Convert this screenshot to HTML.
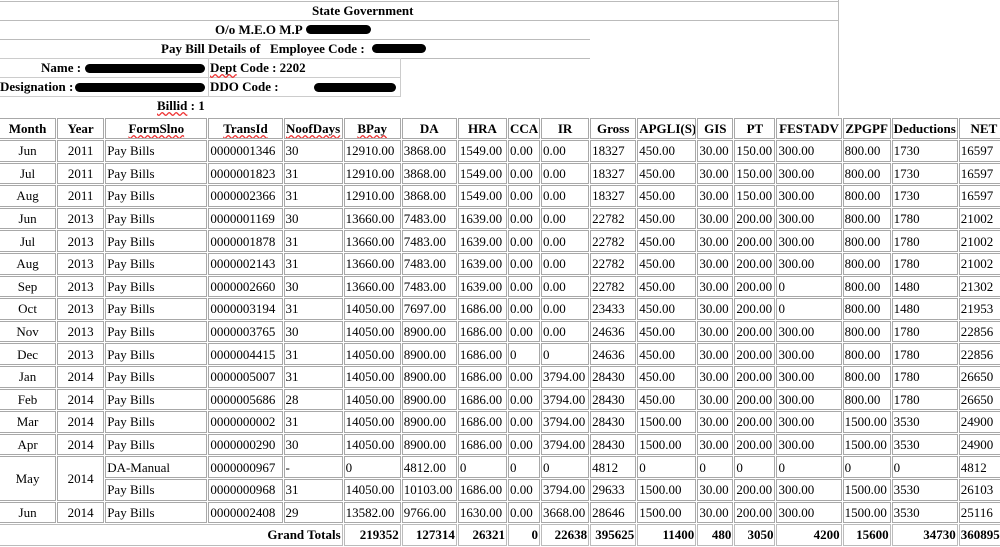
<!DOCTYPE html>
<html><head><meta charset="utf-8"><style>
html,body{margin:0;padding:0;width:1000px;height:547px;overflow:hidden;background:#fff;font-family:"Liberation Serif","Times New Roman",serif;font-size:13px;color:#000}
.a{position:absolute;white-space:nowrap}
.b{font-weight:bold}
.hl{position:absolute;height:0;border-top:1px solid #bbb}
.vl{position:absolute;width:0;border-left:1px solid #bbb}
.box{position:absolute;border:1px solid #ccc;box-sizing:border-box}
.red{position:absolute;background:#000;border-radius:6px;height:9px}
.sq{text-decoration:underline wavy #e33;text-decoration-skip-ink:none}
table{position:absolute;left:-2px;top:117px;border-collapse:separate;border-spacing:1px 1px;table-layout:fixed;width:1012px}
td,th{border:1px solid #a8a8a8;height:19.6px;padding:0 1px;white-space:nowrap;overflow:hidden;text-align:left;font-weight:normal;line-height:19px}
th{font-weight:bold;text-align:center;height:19px}
td.c{text-align:center}
tr.t td{font-weight:bold;text-align:right;border-color:#bbb}
</style></head><body>
<div class="hl" style="left:0;top:1px;width:838px"></div>
<div class="hl" style="left:0;top:20px;width:838px"></div>
<div class="hl" style="left:0;top:39px;width:590px"></div>
<div class="hl" style="left:0;top:58px;width:590px"></div>
<div class="vl" style="left:838px;top:0;height:116px"></div>
<div class="a b" style="left:312px;top:3px">State Government</div>
<div class="a b" style="left:215px;top:22px">O/o M.E.O M.P</div>
<div class="red" style="left:306px;top:25px;width:65px"></div>
<div class="a b" style="left:161px;top:41px">Pay Bill Details of &nbsp;&nbsp;Employee Code :</div>
<div class="red" style="left:372px;top:44px;width:54px"></div>
<div class="box" style="left:-1px;top:58px;width:210px;height:20px"></div>
<div class="box" style="left:208px;top:58px;width:193px;height:20px"></div>
<div class="box" style="left:-1px;top:77px;width:210px;height:20px"></div>
<div class="box" style="left:208px;top:77px;width:193px;height:20px"></div>
<div class="a b" style="left:41px;top:60px">Name :</div>
<div class="red" style="left:85px;top:64px;width:120px"></div>
<div class="a b" style="left:210px;top:60px"><span class="sq">Dept</span> Code : 2202</div>
<div class="a b" style="left:0;top:79px">Designation :</div>
<div class="red" style="left:75px;top:83px;width:130px"></div>
<div class="a b" style="left:210px;top:79px">DDO Code :</div>
<div class="red" style="left:314px;top:83px;width:82px"></div>
<div class="a b" style="left:157px;top:98px"><span class="sq">Billid</span> : 1</div>
<table>
<colgroup><col style="width:57px"><col style="width:47px"><col style="width:102px"><col style="width:74px"><col style="width:59px"><col style="width:57px"><col style="width:55px"><col style="width:49px"><col style="width:32px"><col style="width:48px"><col style="width:46px"><col style="width:59px"><col style="width:36px"><col style="width:41px"><col style="width:65px"><col style="width:48px"><col style="width:66px"><col style="width:50px"></colgroup>
<tr><th>Month</th><th>Year</th><th><span class="sq">FormSlno</span></th><th><span class="sq">TransId</span></th><th><span class="sq">NoofDays</span></th><th><span class="sq">BPay</span></th><th>DA</th><th>HRA</th><th>CCA</th><th>IR</th><th>Gross</th><th>APGLI(S)</th><th>GIS</th><th>PT</th><th>FESTADV</th><th>ZPGPF</th><th>Deductions</th><th>NET</th></tr>
<tr><td class="c">Jun</td><td class="c">2011</td><td>Pay Bills</td><td>0000001346</td><td>30</td><td>12910.00</td><td>3868.00</td><td>1549.00</td><td>0.00</td><td>0.00</td><td>18327</td><td>450.00</td><td>30.00</td><td>150.00</td><td>300.00</td><td>800.00</td><td>1730</td><td>16597</td></tr>
<tr><td class="c">Jul</td><td class="c">2011</td><td>Pay Bills</td><td>0000001823</td><td>31</td><td>12910.00</td><td>3868.00</td><td>1549.00</td><td>0.00</td><td>0.00</td><td>18327</td><td>450.00</td><td>30.00</td><td>150.00</td><td>300.00</td><td>800.00</td><td>1730</td><td>16597</td></tr>
<tr><td class="c">Aug</td><td class="c">2011</td><td>Pay Bills</td><td>0000002366</td><td>31</td><td>12910.00</td><td>3868.00</td><td>1549.00</td><td>0.00</td><td>0.00</td><td>18327</td><td>450.00</td><td>30.00</td><td>150.00</td><td>300.00</td><td>800.00</td><td>1730</td><td>16597</td></tr>
<tr><td class="c">Jun</td><td class="c">2013</td><td>Pay Bills</td><td>0000001169</td><td>30</td><td>13660.00</td><td>7483.00</td><td>1639.00</td><td>0.00</td><td>0.00</td><td>22782</td><td>450.00</td><td>30.00</td><td>200.00</td><td>300.00</td><td>800.00</td><td>1780</td><td>21002</td></tr>
<tr><td class="c">Jul</td><td class="c">2013</td><td>Pay Bills</td><td>0000001878</td><td>31</td><td>13660.00</td><td>7483.00</td><td>1639.00</td><td>0.00</td><td>0.00</td><td>22782</td><td>450.00</td><td>30.00</td><td>200.00</td><td>300.00</td><td>800.00</td><td>1780</td><td>21002</td></tr>
<tr><td class="c">Aug</td><td class="c">2013</td><td>Pay Bills</td><td>0000002143</td><td>31</td><td>13660.00</td><td>7483.00</td><td>1639.00</td><td>0.00</td><td>0.00</td><td>22782</td><td>450.00</td><td>30.00</td><td>200.00</td><td>300.00</td><td>800.00</td><td>1780</td><td>21002</td></tr>
<tr><td class="c">Sep</td><td class="c">2013</td><td>Pay Bills</td><td>0000002660</td><td>30</td><td>13660.00</td><td>7483.00</td><td>1639.00</td><td>0.00</td><td>0.00</td><td>22782</td><td>450.00</td><td>30.00</td><td>200.00</td><td>0</td><td>800.00</td><td>1480</td><td>21302</td></tr>
<tr><td class="c">Oct</td><td class="c">2013</td><td>Pay Bills</td><td>0000003194</td><td>31</td><td>14050.00</td><td>7697.00</td><td>1686.00</td><td>0.00</td><td>0.00</td><td>23433</td><td>450.00</td><td>30.00</td><td>200.00</td><td>0</td><td>800.00</td><td>1480</td><td>21953</td></tr>
<tr><td class="c">Nov</td><td class="c">2013</td><td>Pay Bills</td><td>0000003765</td><td>30</td><td>14050.00</td><td>8900.00</td><td>1686.00</td><td>0.00</td><td>0.00</td><td>24636</td><td>450.00</td><td>30.00</td><td>200.00</td><td>300.00</td><td>800.00</td><td>1780</td><td>22856</td></tr>
<tr><td class="c">Dec</td><td class="c">2013</td><td>Pay Bills</td><td>0000004415</td><td>31</td><td>14050.00</td><td>8900.00</td><td>1686.00</td><td>0</td><td>0</td><td>24636</td><td>450.00</td><td>30.00</td><td>200.00</td><td>300.00</td><td>800.00</td><td>1780</td><td>22856</td></tr>
<tr><td class="c">Jan</td><td class="c">2014</td><td>Pay Bills</td><td>0000005007</td><td>31</td><td>14050.00</td><td>8900.00</td><td>1686.00</td><td>0.00</td><td>3794.00</td><td>28430</td><td>450.00</td><td>30.00</td><td>200.00</td><td>300.00</td><td>800.00</td><td>1780</td><td>26650</td></tr>
<tr><td class="c">Feb</td><td class="c">2014</td><td>Pay Bills</td><td>0000005686</td><td>28</td><td>14050.00</td><td>8900.00</td><td>1686.00</td><td>0.00</td><td>3794.00</td><td>28430</td><td>450.00</td><td>30.00</td><td>200.00</td><td>300.00</td><td>800.00</td><td>1780</td><td>26650</td></tr>
<tr><td class="c">Mar</td><td class="c">2014</td><td>Pay Bills</td><td>0000000002</td><td>31</td><td>14050.00</td><td>8900.00</td><td>1686.00</td><td>0.00</td><td>3794.00</td><td>28430</td><td>1500.00</td><td>30.00</td><td>200.00</td><td>300.00</td><td>1500.00</td><td>3530</td><td>24900</td></tr>
<tr><td class="c">Apr</td><td class="c">2014</td><td>Pay Bills</td><td>0000000290</td><td>30</td><td>14050.00</td><td>8900.00</td><td>1686.00</td><td>0.00</td><td>3794.00</td><td>28430</td><td>1500.00</td><td>30.00</td><td>200.00</td><td>300.00</td><td>1500.00</td><td>3530</td><td>24900</td></tr>
<tr><td class="c" rowspan="2">May</td><td class="c" rowspan="2">2014</td><td>DA-Manual</td><td>0000000967</td><td>-</td><td>0</td><td>4812.00</td><td>0</td><td>0</td><td>0</td><td>4812</td><td>0</td><td>0</td><td>0</td><td>0</td><td>0</td><td>0</td><td>4812</td></tr>
<tr><td>Pay Bills</td><td>0000000968</td><td>31</td><td>14050.00</td><td>10103.00</td><td>1686.00</td><td>0.00</td><td>3794.00</td><td>29633</td><td>1500.00</td><td>30.00</td><td>200.00</td><td>300.00</td><td>1500.00</td><td>3530</td><td>26103</td></tr>
<tr><td class="c">Jun</td><td class="c">2014</td><td>Pay Bills</td><td>0000002408</td><td>29</td><td>13582.00</td><td>9766.00</td><td>1630.00</td><td>0.00</td><td>3668.00</td><td>28646</td><td>1500.00</td><td>30.00</td><td>200.00</td><td>300.00</td><td>1500.00</td><td>3530</td><td>25116</td></tr>
<tr class="t"><td colspan="5">Grand Totals</td><td>219352</td><td>127314</td><td>26321</td><td>0</td><td>22638</td><td>395625</td><td>11400</td><td>480</td><td>3050</td><td>4200</td><td>15600</td><td>34730</td><td style="text-align:left">360895</td></tr>
</table>
</body></html>
